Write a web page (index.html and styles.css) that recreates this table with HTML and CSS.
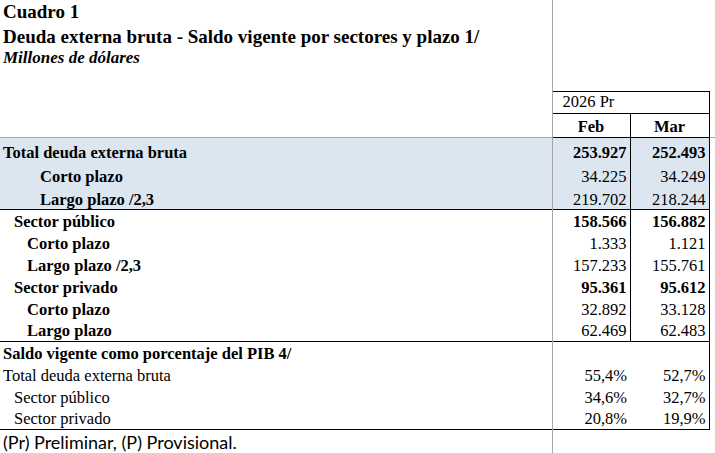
FILE: index.html
```html
<!DOCTYPE html>
<html lang="es">
<head>
<meta charset="utf-8">
<title>Cuadro 1</title>
<link rel="stylesheet" href="styles.css">
</head>
<body>
<table class="sheet">
  <colgroup>
    <col class="c-label">
    <col class="c-feb">
    <col class="c-mar">
    <col class="c-spare">
  </colgroup>
  <tbody>
    <tr class="r-title"><td class="label title1">Cuadro 1</td><td></td><td></td><td></td></tr>
    <tr class="r-title2"><td class="label title2">Deuda externa bruta - Saldo vigente por sectores y plazo 1/</td><td></td><td></td><td></td></tr>
    <tr class="r-sub"><td class="label subtitle">Millones de dólares</td><td></td><td></td><td></td></tr>
    <tr class="r-blank"><td class="label"></td><td></td><td></td><td></td></tr>
    <tr class="r-year"><td class="label"></td><td class="year" colspan="2">2026 Pr</td><td></td></tr>
    <tr class="r-month"><td class="label"></td><td class="month bl">Feb</td><td class="month br">Mar</td><td></td></tr>

    <tr class="hl top-gray"><td class="label b">Total deuda externa bruta</td><td class="num first b">253.927</td><td class="num b br">252.493</td><td class="spare"></td></tr>
    <tr class="hl"><td class="label b ind3">Corto plazo</td><td class="num first">34.225</td><td class="num br">34.249</td><td class="spare"></td></tr>
    <tr class="hl"><td class="label b ind3">Largo plazo /2,3</td><td class="num first">219.702</td><td class="num br">218.244</td><td class="spare"></td></tr>

    <tr class="row top-black"><td class="label b ind1">Sector público</td><td class="num first b">158.566</td><td class="num b br">156.882</td><td class="spare"></td></tr>
    <tr class="row"><td class="label b ind2">Corto plazo</td><td class="num first">1.333</td><td class="num br">1.121</td><td class="spare"></td></tr>
    <tr class="row"><td class="label b ind2">Largo plazo /2,3</td><td class="num first">157.233</td><td class="num br">155.761</td><td class="spare"></td></tr>
    <tr class="row"><td class="label b ind1">Sector privado</td><td class="num first b">95.361</td><td class="num b br">95.612</td><td class="spare"></td></tr>
    <tr class="row"><td class="label b ind2">Corto plazo</td><td class="num first">32.892</td><td class="num br">33.128</td><td class="spare"></td></tr>
    <tr class="row"><td class="label b ind2">Largo plazo</td><td class="num first">62.469</td><td class="num br">62.483</td><td class="spare"></td></tr>

    <tr class="row top-black"><td class="label b">Saldo vigente como porcentaje del PIB 4/</td><td class="pct"></td><td class="pct br"></td><td class="spare"></td></tr>
    <tr class="row"><td class="label">Total deuda externa bruta</td><td class="pct">55,4%</td><td class="pct br">52,7%</td><td class="spare"></td></tr>
    <tr class="row"><td class="label ind1">Sector público</td><td class="pct">34,6%</td><td class="pct br">32,7%</td><td class="spare"></td></tr>
    <tr class="row"><td class="label ind1">Sector privado</td><td class="pct">20,8%</td><td class="pct br">19,9%</td><td class="spare"></td></tr>

    <tr class="r-note top-black"><td class="label note">(Pr) Preliminar, (P) Provisional.</td><td></td><td></td><td class="spare"></td></tr>
  </tbody>
</table>
</body>
</html>
```

FILE: styles.css
```css
html, body {
  margin: 0;
  padding: 0;
  background: #ffffff;
  overflow: hidden;
}

.sheet {
  border-collapse: collapse;
  table-layout: fixed;
  width: 715px;
  font-family: "Liberation Serif", "Times New Roman", serif;
  font-size: 16.5px;
  color: #000000;
}

.c-label { width: 552px; }
.c-feb { width: 78px; }
.c-mar { width: 79px; }
.c-spare { width: 6px; }

.sheet td {
  padding: 0 3px 1px 3px;
  white-space: nowrap;
  overflow: visible;
  line-height: 1;
  vertical-align: bottom;
}

.sheet .label {
  border-right: 1px solid #a6a6a6;
}

.sheet .b { font-weight: bold; }

.sheet .title1 { font-size: 19px; font-weight: bold; }
.sheet .title2 { font-size: 19px; font-weight: bold; }
.sheet .subtitle { font-size: 17px; font-weight: bold; font-style: italic; }

.r-title { height: 24px; }
.r-title2 { height: 22px; }
.r-sub { height: 22px; }
.r-blank { height: 23px; }
.r-year { height: 22px; }
.r-month { height: 24px; }

.sheet .r-title td { padding-bottom: 3px; }
.sheet .r-title2 td { padding-bottom: 0; }
.sheet .r-sub td { padding-bottom: 2px; }
.sheet .r-year td { padding-bottom: 2px; }
.sheet .r-month td { padding-bottom: 1px; }

.sheet .year {
  border: 1px solid #000000;
  padding-left: 10px;
}

.sheet .month {
  font-weight: bold;
  text-align: center;
  border: 1px solid #000000;
}

.sheet .top-gray td { border-top: 1px solid #a6a6a6; }
.sheet .top-black td { border-top: 1px solid #000000; }
.sheet .top-black td.spare { border-top: none; }

.hl { height: 24px; }
.sheet .hl td { padding-bottom: 0; }
.sheet .hl .label, .sheet .hl .num { background: #dce6f1; }

.row { height: 22px; }

.sheet .num {
  text-align: right;
  border-left: 1px solid #000000;
}
.sheet .num.first { border-left-color: #a6a6a6; }

.sheet .pct {
  text-align: right;
}

.sheet .br { border-right: 1px solid #000000; }
.sheet .bl { border-left: 1px solid #000000; }

.sheet .ind1 { padding-left: 14px; }
.sheet .ind2 { padding-left: 27px; }
.sheet .ind3 { padding-left: 40px; }

.r-note { height: 25px; }
.sheet .r-note td {
  vertical-align: top;
  padding-top: 2px;
  padding-bottom: 0;
}
.sheet .note {
  font-family: Lato, "Open Sans", sans-serif;
  font-size: 18px;
  line-height: 20px;
}
```
